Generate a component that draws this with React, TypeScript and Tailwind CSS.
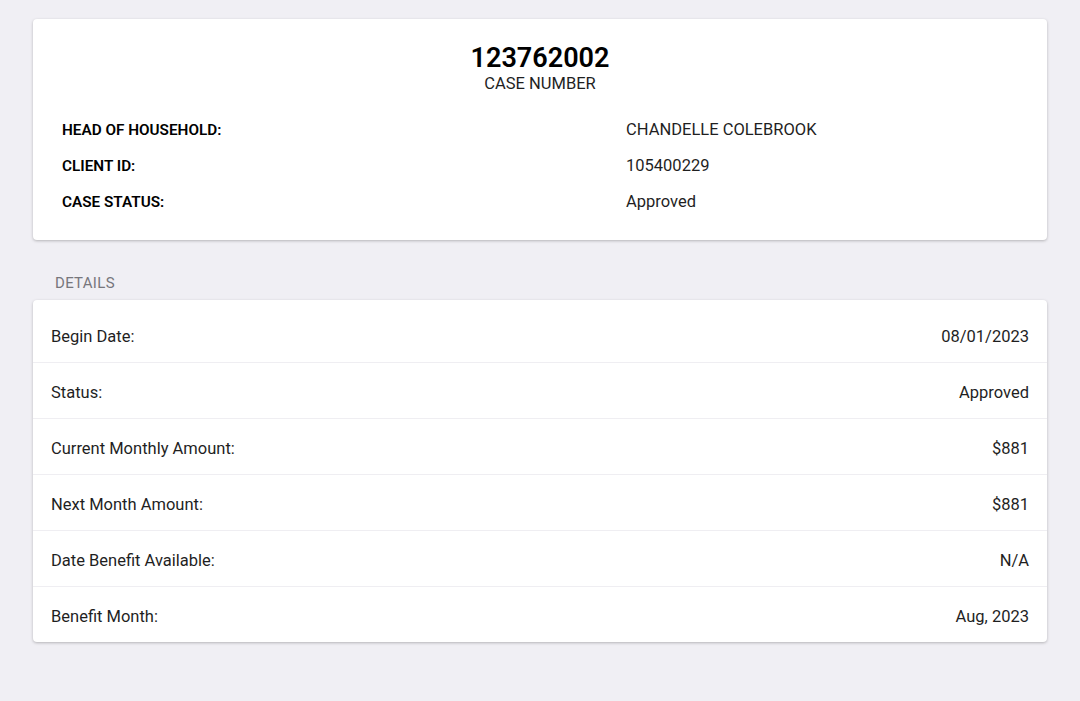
import React from 'react';

const summary = [
  { label: 'HEAD OF HOUSEHOLD:', value: 'CHANDELLE COLEBROOK' },
  { label: 'CLIENT ID:', value: '105400229' },
  { label: 'CASE STATUS:', value: 'Approved' },
];

const details = [
  { label: 'Begin Date:', value: '08/01/2023' },
  { label: 'Status:', value: 'Approved' },
  { label: 'Current Monthly Amount:', value: '$881' },
  { label: 'Next Month Amount:', value: '$881' },
  { label: 'Date Benefit Available:', value: 'N/A' },
  { label: 'Benefit Month:', value: 'Aug, 2023' },
];

export default function App() {
  return (
    <div
      className="min-h-[701px] bg-[#f0eff4] px-[33px] pt-[19px] text-[#1f1f1f]"
      style={{ fontFamily: 'Roboto, "Noto Sans", sans-serif' }}
    >
      {/* Case summary */}
      <div className="rounded bg-white pt-[22px] pb-[20px] shadow-[0_1px_3px_rgba(0,0,0,0.25)]">
        <div className="text-center">
          <div className="text-[27px] leading-[34px] font-semibold text-black">123762002</div>
          <div className="text-[16.5px] leading-[18px]">CASE NUMBER</div>
        </div>
        <div className="mt-[19px] px-[29px]">
          {summary.map((row) => (
            <div key={row.label} className="grid h-9 grid-cols-[564px_1fr] items-center">
              <div className="text-[15.3px] font-semibold text-black">{row.label}</div>
              <div className="text-[16.5px]">{row.value}</div>
            </div>
          ))}
        </div>
      </div>

      {/* Details */}
      <div className="px-[22px] pt-[35px] pb-[9px] text-[15px] leading-4 tracking-[0.3px] text-[#77767c]">
        DETAILS
      </div>
      <div className="rounded bg-white pt-[7px] shadow-[0_1px_3px_rgba(0,0,0,0.25)]">
        {details.map((row, i) => {
          const last = i === details.length - 1;
          return (
            <div
              key={row.label}
              className={`flex items-center justify-between px-[18px] pt-[6px] text-[16.5px] ${
                last ? 'h-[55px]' : 'h-14 border-b border-[#efeef2]'
              }`}
            >
              <span>{row.label}</span>
              <span>{row.value}</span>
            </div>
          );
        })}
      </div>
    </div>
  );
}
